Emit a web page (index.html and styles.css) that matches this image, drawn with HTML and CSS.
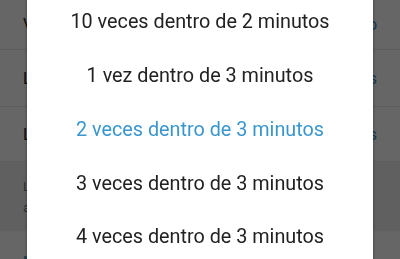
FILE: index.html
```html
<!DOCTYPE html>
<html>
<head>
<meta charset="utf-8">
<link rel="stylesheet" href="styles.css">
</head>
<body>
<div class="page">
  <div class="row r1"><span class="lbl">Vibrar</span><span class="val">Predeterminado</span></div>
  <div class="row r2"><span class="lbl">Luz</span><span class="val">Blancas</span></div>
  <div class="row r3"><span class="lbl">Límite</span><span class="val">2 veces</span></div>
  <div class="row r4 section"><span class="lbl small">Limitar<br>a la cantidad</span></div>
  <div class="row r5"><span class="lbl link">Mensajes</span></div>
</div>
<div class="overlay"></div>
<div class="dialog">
  <div class="item">10 veces dentro de 2 minutos</div>
  <div class="item">1 vez dentro de 3 minutos</div>
  <div class="item active">2 veces dentro de 3 minutos</div>
  <div class="item">3 veces dentro de 3 minutos</div>
  <div class="item">4 veces dentro de 3 minutos</div>
</div>
</body>
</html>
```

FILE: styles.css
```css
html, body {
  margin: 0;
  padding: 0;
  width: 400px;
  height: 259px;
  overflow: hidden;
  font-family: Roboto, "Noto Sans", sans-serif;
  background: #ffffff;
}
.page {
  display: flex;
  flex-direction: column;
}
.row {
  display: flex;
  align-items: center;
  justify-content: space-between;
  padding: 0 23px 0 23px;
  border-bottom: 1px solid #e6e6e6;
  box-sizing: border-box;
  font-size: 16px;
  color: #222;
}
.r1 { height: 50px; }
.r2 { height: 57px; }
.r3 { height: 55px; }
.r4 { height: 69px; background: #f0f0f0; border-bottom: none; }
.r5 { height: 40px; align-items: flex-end; }
.lbl.small { font-size: 13px; color: #777; line-height: 21px; }
.lbl.link { color: #3a8fc7; font-size: 14px; }
.val { color: #3a8fc7; }
.overlay {
  position: fixed;
  inset: 0;
  background: rgba(0, 0, 0, 0.6);
}
.dialog {
  position: absolute;
  left: 27px;
  top: -5px;
  width: 346px;
  height: 290px;
  background: #ffffff;
  box-shadow: 0 0 3px rgba(0, 0, 0, 0.4);
  display: flex;
  flex-direction: column;
}
.item {
  height: 53.75px;
  flex: none;
  display: flex;
  align-items: center;
  justify-content: center;
  font-size: 19.8px;
  color: #222222;
}
.item.active {
  color: #3a96cd;
}
```
